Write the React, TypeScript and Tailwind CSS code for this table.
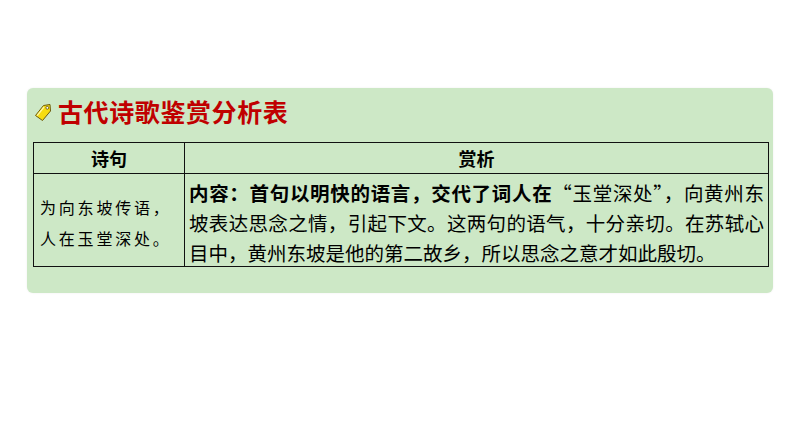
import React from "react";

const sans = "font-['Noto_Sans_CJK_SC','Noto_Sans_CJK_SC',sans-serif]";

function TagIcon() {
  return (
    <svg width="19" height="20" viewBox="0 0 19 20" className="shrink-0">
      <path
        d="M1.5 13.5 L9.5 3.5 L16 2.5 L16.5 9 L8.5 18.5 Z"
        fill="#f6dc10"
        stroke="#6b5a10"
        strokeWidth="1"
        strokeLinejoin="round"
      />
      <path d="M3.2 13.6 L10 5" stroke="#fff7a8" strokeWidth="1.3" />
      <circle cx="13.3" cy="5.8" r="1.4" fill="#fff" stroke="#5a4a10" strokeWidth="0.8" />
    </svg>
  );
}

export default function App() {
  return (
    <div className={`w-[794px] h-[447px] bg-white ${sans}`}>
      <div className="pt-[88px] pl-[27px]">
        <div className="w-[746px] h-[205px] bg-[#cde8c6] rounded-[6px] px-[6px] shadow-[0_0_2px_rgba(0,0,0,0.08)]">
          <div className="h-[54px] flex items-center gap-[5px] pl-[1px] pb-[7px]">
            <TagIcon />
            <div className="text-[25px] font-bold text-[#c00000] leading-none tracking-[0.6px]">
              古代诗歌鉴赏分析表
            </div>
          </div>
          <div className="w-[736px] border-[1.5px] border-[#111]">
            <div className="flex h-[31px] border-b-[1.5px] border-[#111]">
              <div className="w-[151px] border-r-[1.5px] border-[#111] flex items-center justify-center text-[18px] font-bold text-black pt-[1px]">
                诗句
              </div>
              <div className="flex-1 flex items-center justify-center text-[18px] font-bold text-black pt-[1px]">
                赏析
              </div>
            </div>
            <div className="flex h-[92px]">
              <div className="w-[151px] border-r-[1.5px] border-[#111] flex flex-col justify-center pl-[6px] pt-[6px] text-[16px] leading-[31px] tracking-[2.8px] text-black">
                <div>为向东坡传语，</div>
                <div>人在玉堂深处。</div>
              </div>
              <div className="flex-1 pl-[4px] pr-[4px] pt-[4px] text-[19.5px] leading-[30px] text-black">
                <div className="text-justify [text-align-last:justify]">
                  <span className="font-bold">内容：首句以明快的语言，交代了词人在</span>“玉堂深处”，向黄州东
                </div>
                <div className="text-justify [text-align-last:justify]">
                  坡表达思念之情，引起下文。这两句的语气，十分亲切。在苏轼心
                </div>
                <div>目中，黄州东坡是他的第二故乡，所以思念之意才如此殷切。</div>
              </div>
            </div>
          </div>
        </div>
      </div>
    </div>
  );
}
